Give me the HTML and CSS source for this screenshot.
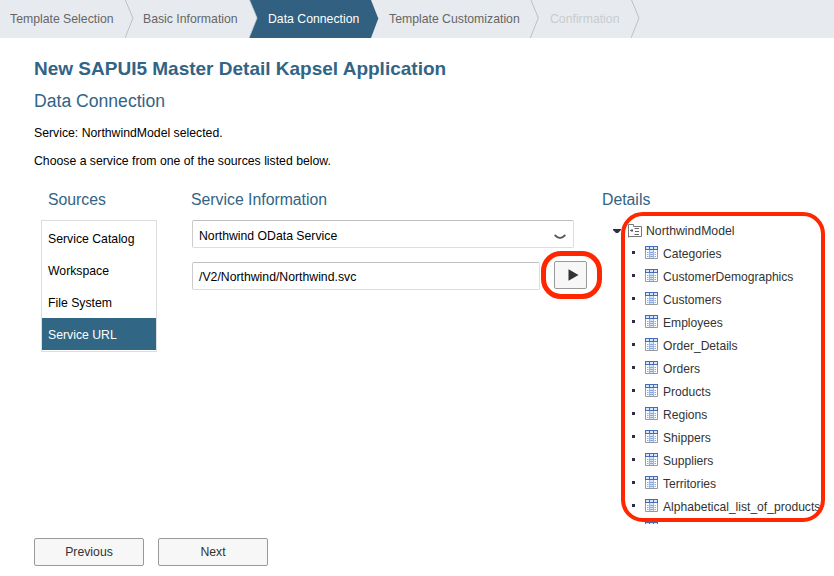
FILE: index.html
```html
<!DOCTYPE html>
<html lang="en">
<head>
<meta charset="utf-8">
<title>New SAPUI5 Master Detail Kapsel Application</title>
<link rel="stylesheet" href="styles.css">
</head>
<body>
<nav class="steps">
  <span class="step step-template">Template Selection</span>
  <svg class="chevron" viewBox="0 0 9 38"><path class="line" d="M0 -.5 8 18 0 38"/></svg>
  <span class="step step-basic">Basic Information</span>
  <svg class="chevron" viewBox="0 0 9 38"><path class="fill" d="M.5 0H9V38H0L8 18Z"/><path class="edge" d="M.5 0 8 18 0 38"/></svg>
  <span class="step step-data">Data Connection</span>
  <svg class="chevron" viewBox="0 0 9 38"><path class="fill" d="M0 0H1L8.3 18.5 1 38H0Z"/></svg>
  <span class="step step-custom">Template Customization</span>
  <svg class="chevron" viewBox="0 0 9 38"><path class="line" d="M.8 -.5 8.3 18 .3 38"/></svg>
  <span class="step step-confirm">Confirmation</span>
  <svg class="chevron" viewBox="0 0 9 38"><path class="line" d="M.3 -.5 8 18 0 38"/></svg>
</nav>
<main class="page">
  <h1>New SAPUI5 Master Detail Kapsel Application</h1>
  <h2>Data Connection</h2>
  <p>Service: NorthwindModel selected.</p>
  <p>Choose a service from one of the sources listed below.</p>
  <div class="columns">
    <section class="sources">
      <h3>Sources</h3>
      <ul class="source-list">
        <li>Service Catalog</li>
        <li>Workspace</li>
        <li>File System</li>
        <li class="selected">Service URL</li>
      </ul>
    </section>
    <section class="info">
      <h3>Service Information</h3>
      <div class="field select"><span>Northwind OData Service</span>
        <svg width="12" height="6" viewBox="0 0 12 6"><path d="M.6 1.2C2.500 2 3.500 3.900 6 3.900S9.500 2 11.400 1.200" fill="none" stroke="#555" stroke-width="1.900"/></svg>
      </div>
      <div class="url-row">
        <div class="field url">/V2/Northwind/Northwind.svc</div>
        <button class="run" aria-label="Run"><svg width="11" height="12" viewBox="0 0 11 12"><path d="M.5 .3 10.500 6 .5 11.700Z" fill="#333"/></svg></button>
      </div>
    </section>
    <section class="details">
      <h3>Details</h3>
      <div class="tree">
        <div class="root">
          <svg class="caret" width="8" height="4" viewBox="0 0 8 4"><path d="M0 0H8V1L5 4H3L0 1Z" fill="#2e2e48"/></svg>
          <svg width="14" height="14" viewBox="0 0 14 14"><path d="M.5 13.500V.5H5.500V2.500H13.500V12.500H.5" fill="#fff" stroke="#777"/><path d="M2 6.500H5M6.500 4.500H11M7 7.500H11M6.500 10.500H11" stroke="#666" fill="none"/><path d="M3 5.500H5V7.500H3Z" fill="#555"/></svg>
          <span class="tree-label">NorthwindModel</span>
        </div>
        <ul class="entities">
          <li>Categories</li><li>CustomerDemographics</li><li>Customers</li><li>Employees</li><li>Order_Details</li><li>Orders</li><li>Products</li><li>Regions</li><li>Shippers</li><li>Suppliers</li><li>Territories</li><li>Alphabetical_list_of_products</li><li></li>
        </ul>
      </div>
    </section>
  </div>
  <footer class="actions"><button>Previous</button><button>Next</button></footer>
</main>
<div class="highlight highlight-run"></div>
<div class="highlight highlight-tree"></div>
<svg width="0" height="0" class="defs">
  <symbol id="table" viewBox="0 0 13 13">
    <path d="M0 0H13V13H0Z" fill="#fff"/>
    <path d="M4 4H9V12H4Z" fill="#d5e6fb"/>
    <path d="M.5 4V12.500H12.500V4" fill="none" stroke="#999"/>
    <path d="M2 6.500H3.500M5 6.500H8M9.500 6.500H11M2 8.500H3.500M5 8.500H8M9.500 8.500H11M2 10.500H3.500M5 10.500H8M9.500 10.500H11" stroke="#88a7dc"/>
    <path d="M4.500 4V12M8.500 4V12" stroke="#9bb6e4"/>
    <path d="M0 0H13V4H0Z" fill="#456db5"/>
    <path d="M1 1H4V3H1ZM5 1H8V3H5ZM9 1H12V3H9Z" fill="#d9e5f8"/>
  </symbol>
</svg>
<script src="script.js"></script>
</body>
</html>
```
FILE: styles.css
```css
* { box-sizing: border-box; }
body { margin: 0; background: #fff; color: #000; font: 12.250px/16px "Liberation Sans", Arial, sans-serif; width: 834px; height: 576px; overflow: hidden; position: relative; }
h1, h2, h3, p, ul { margin: 0; padding: 0; font-weight: normal; }
ul { list-style: none; }
.steps { display: flex; height: 38px; background: #e7ebef; color: #666; white-space: nowrap; }
.step { line-height: 38px; height: 38px; flex: none; }
.step-template { width: 125px; padding-left: 10px; }
.step-basic { width: 115px; padding-left: 9px; }
.step-data { width: 112px; padding-left: 10px; background: #316080; color: #fff; }
.step-custom { width: 151px; padding-left: 10px; }
.step-confirm { width: 92px; padding-left: 11px; color: #c8cbce; }
.chevron { width: 9px; height: 38px; flex: none; }
.line { fill: none; stroke: #bcc1c5; }
.fill { fill: #316080; }
.edge { fill: none; stroke: #c5d0d9; stroke-width: .8; }
.page { padding: 19px 0 0 34px; white-space: nowrap; }
h1 { font-size: 19px; font-weight: bold; line-height: 24px; color: #316485; }
h2 { font-size: 17.600px; line-height: 22px; color: #316485; margin-top: 9px; }
h3 { font-size: 15.800px; line-height: 20px; color: #316485; }
p { margin-top: 12px; }
p:first-of-type { margin-top: 13px; }
.columns { display: flex; height: 338px; margin-top: 21px; }
.sources { width: 123px; padding-left: 7px; margin-right: 35px; }
.sources h3 { padding-left: 7px; }
.source-list { margin-top: 10px; border: 1px solid #ddd; height: 132px; padding-top: 1px; }
.source-list li { height: 32px; line-height: 34px; padding-left: 6px; }
.source-list .selected { background: #316684; color: #fff; }
.info { width: 382px; }
.info h3 { margin-left: -1px; }
.field { height: 28px; border: 1px solid #ddd; border-top-color: #bfbfbf; border-left-color: #ccc; border-radius: 2px; padding: 3px 6px 0; line-height: 24px; }
.select { display: flex; justify-content: space-between; margin-top: 10px; }
.select svg { margin: 10px 1px 0 0; flex: none; }
.url-row { display: flex; margin-top: 13px; gap: 14px; }
.url { width: 348px; margin-top: 1px; padding-top: 2px; flex: none; }
button { font: inherit; color: #333; background: #f7f7f7; border: 1px solid #999; border-radius: 2px; padding: 0; }
.run { width: 33px; height: 28px; display: flex; align-items: center; justify-content: center; padding-left: 6px; flex: none; }
.details { margin-left: 28px; width: 232px; }
.tree { color: #333; height: 305px; overflow: hidden; padding-left: 11px; margin-top: 9px; }
.root { display: flex; align-items: center; height: 23px; }
.caret { margin-right: 7px; }
.tree-label { padding-left: 4px; }
.entities { font-size: 12.100px; }
.entities li { display: flex; align-items: center; height: 23px; padding-left: 19px; }
.bullet { width: 3px; height: 3px; background: #2e2e48; margin: 0 10px 3px 0; flex: none; }
.entities svg { width: 13px; height: 13px; margin: 0 5px 3px 0; flex: none; }
.actions { display: flex; gap: 14px; margin-top: 10px; }
.actions button { width: 110px; height: 28px; }
.highlight { position: absolute; border: 4px solid #ff2600; }
.highlight-run { left: 541px; top: 251px; width: 61px; height: 48px; border-width: 5px; border-radius: 20px; }
.highlight-tree { left: 621px; top: 212px; width: 204px; height: 310px; border-radius: 22px; }
.defs { position: absolute; }
```
FILE: script.js
```js
// Put the leaf marker and the table icon in front of each entity name.
document.querySelectorAll('.entities li').forEach(function (item) {
  item.insertAdjacentHTML('afterbegin', '<i class="bullet"></i><svg><use href="#table"/></svg>');
});
```
